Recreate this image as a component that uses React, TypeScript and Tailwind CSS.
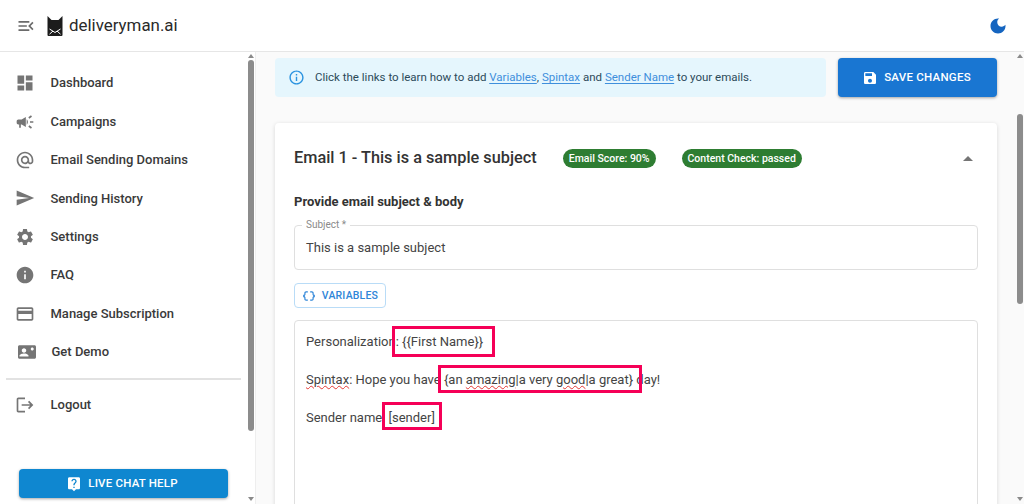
import type { ReactNode } from "react";

const Icon = ({ d, className }: { d: string; className?: string }) => (
  <svg viewBox="0 0 24 24" fill="currentColor" className={className}>
    <path d={d} />
  </svg>
);

const paths = {
  menuOpen: "M3 18h13v-2H3v2zm0-5h10v-2H3v2zm0-7v2h13V6H3zm18 9.59L17.42 12 21 8.41 19.59 7l-5 5 5 5L21 15.59z",
  dashboard: "M3 13h8V3H3v10zm0 8h8v-6H3v6zm10 0h8V11h-8v10zm0-18v6h8V3h-8z",
  campaign:
    "M18 11v2h4v-2h-4zm-2 6.61c.96.71 2.21 1.65 3.2 2.39.4-.53.8-1.07 1.2-1.6-.99-.74-2.24-1.68-3.2-2.4-.4.54-.8 1.08-1.2 1.61zM20.4 5.6c-.4-.53-.8-1.07-1.2-1.6-.99.74-2.24 1.68-3.2 2.4.4.53.8 1.07 1.2 1.6.96-.72 2.21-1.65 3.2-2.4zM4 9c-1.1 0-2 .9-2 2v2c0 1.1.9 2 2 2h1v4h2v-4h1l5 3V6L8 9H4zm11.5 3c0-1.33-.58-2.53-1.5-3.35v6.69c.92-.81 1.5-2.01 1.5-3.34z",
  at: "M12 2C6.48 2 2 6.48 2 12s4.48 10 10 10h5v-2h-5c-4.34 0-8-3.66-8-8s3.66-8 8-8 8 3.66 8 8v1.43c0 .79-.71 1.57-1.5 1.57s-1.5-.78-1.5-1.57V12c0-2.76-2.24-5-5-5s-5 2.24-5 5 2.24 5 5 5c1.38 0 2.64-.56 3.54-1.47.65.89 1.77 1.47 2.96 1.47 1.97 0 3.5-1.6 3.5-3.57V12c0-5.52-4.48-10-10-10zm0 13c-1.66 0-3-1.34-3-3s1.34-3 3-3 3 1.34 3 3-1.34 3-3 3z",
  send: "M2.01 21 23 12 2.01 3 2 10l15 2-15 2z",
  settings:
    "M19.14 12.94c.04-.3.06-.61.06-.94 0-.32-.02-.64-.07-.94l2.03-1.58c.18-.14.23-.41.12-.61l-1.92-3.32c-.12-.22-.37-.29-.59-.22l-2.39.96c-.5-.38-1.03-.7-1.62-.94l-.36-2.54c-.04-.24-.24-.41-.48-.41h-3.84c-.24 0-.43.17-.47.41l-.36 2.54c-.59.24-1.13.57-1.62.94l-2.39-.96c-.22-.08-.47 0-.59.22L2.74 8.87c-.12.21-.08.47.12.61l2.03 1.58c-.05.3-.09.63-.09.94s.02.64.07.94l-2.03 1.58c-.18.14-.23.41-.12.61l1.92 3.32c.12.22.37.29.59.22l2.39-.96c.5.38 1.03.7 1.62.94l.36 2.54c.05.24.24.41.48.41h3.84c.24 0 .44-.17.47-.41l.36-2.54c.59-.24 1.13-.56 1.62-.94l2.39.96c.22.08.47 0 .59-.22l1.92-3.32c.12-.22.07-.47-.12-.61l-2.01-1.58zM12 15.6c-1.98 0-3.6-1.62-3.6-3.6s1.62-3.6 3.6-3.6 3.6 1.62 3.6 3.6-1.62 3.6-3.6 3.6z",
  info: "M12 2C6.48 2 2 6.48 2 12s4.48 10 10 10 10-4.48 10-10S17.52 2 12 2zm1 15h-2v-6h2v6zm0-8h-2V7h2v2z",
  card: "M20 4H4c-1.11 0-1.99.89-1.99 2L2 18c0 1.11.89 2 2 2h16c1.11 0 2-.89 2-2V6c0-1.11-.89-2-2-2zm0 14H4v-6h16v6zm0-10H4V6h16v2z",
  demo: "M22 3H2C.9 3 0 3.9 0 5v14c0 1.1.9 2 2 2h20c1.1 0 1.99-.9 1.99-2L24 5c0-1.1-.9-2-2-2zM8 7c1.66 0 3 1.34 3 3s-1.34 3-3 3-3-1.34-3-3 1.34-3 3-3zm6 11H2v-1c0-2 4-3 6-3s6 1 6 3v1zm5-8c-1.1 0-2-.9-2-2s.9-2 2-2 2 .9 2 2-.9 2-2 2z",
  logout: "M17 7l-1.41 1.41L18.17 11H8v2h10.17l-2.58 2.58L17 17l5-5zM4 5h8V3H4c-1.1 0-2 .9-2 2v14c0 1.1.9 2 2 2h8v-2H4V5z",
  help: "M19 2H5c-1.11 0-2 .9-2 2v14c0 1.1.89 2 2 2h4l3 3 3-3h4c1.1 0 2-.9 2-2V4c0-1.1-.9-2-2-2zm-6 16h-2v-2h2v2zm2.07-7.75-.9.92C13.45 11.9 13 12.5 13 14h-2v-.5c0-1.1.45-2.1 1.17-2.83l1.24-1.26c.37-.36.59-.86.59-1.41 0-1.1-.9-2-2-2s-2 .9-2 2H8c0-2.21 1.79-4 4-4s4 1.79 4 4c0 .88-.36 1.68-.93 2.25z",
  save: "M17 3H5c-1.11 0-2 .9-2 2v14c0 1.1.89 2 2 2h14c1.1 0 2-.9 2-2V7l-4-4zm-5 16c-1.66 0-3-1.34-3-3s1.34-3 3-3 3 1.34 3 3-1.34 3-3 3zm3-10H5V5h10v4z",
  moon: "M12 3c-4.97 0-9 4.03-9 9s4.03 9 9 9 9-4.03 9-9c0-.46-.04-.92-.1-1.36-.98 1.37-2.58 2.26-4.4 2.26-2.98 0-5.4-2.42-5.4-5.4 0-1.81.89-3.42 2.26-4.4-.44-.06-.9-.1-1.36-.1z",
  infoOutline: "M11 7h2v2h-2zm0 4h2v6h-2zm1-9C6.48 2 2 6.48 2 12s4.48 10 10 10 10-4.48 10-10S17.52 2 12 2zm0 18c-4.41 0-8-3.59-8-8s3.59-8 8-8 8 3.59 8 8-3.59 8-8 8z",
  braces:
    "M4 7v2c0 .55-.45 1-1 1H2v4h1c.55 0 1 .45 1 1v2c0 1.65 1.35 3 3 3h3v-2H7c-.55 0-1-.45-1-1v-2c0-1.3-.84-2.42-2-2.83v-.34C5.16 11.42 6 10.3 6 9V7c0-.55.45-1 1-1h3V4H7C5.35 4 4 5.35 4 7zm17 3c-.55 0-1-.45-1-1V7c0-1.65-1.35-3-3-3h-3v2h3c.55 0 1 .45 1 1v2c0 1.3.84 2.42 2 2.83v.34c-1.16.41-2 1.52-2 2.83v2c0 .55-.45 1-1 1h-3v2h3c1.65 0 3-1.35 3-3v-2c0-.55.45-1 1-1h1v-4h-1z",
};

const navItems = [
  { label: "Dashboard", icon: paths.dashboard },
  { label: "Campaigns", icon: paths.campaign },
  { label: "Email Sending Domains", icon: paths.at },
  { label: "Sending History", icon: paths.send },
  { label: "Settings", icon: paths.settings },
  { label: "FAQ", icon: paths.info },
  { label: "Manage Subscription", icon: paths.card },
];

function NavRow({ label, icon, shift }: { label: string; icon: string; shift?: boolean }) {
  return (
    <div className={`flex h-[38.4px] items-center ${shift ? "pl-[18px]" : "pl-[15px]"}`}>
      <Icon d={icon} className={`shrink-0 text-[#757575] ${shift ? "h-[18px] w-[18px]" : "h-5 w-5"}`} />
      <span className="ml-[15.5px] text-[13px] font-medium text-[#3a3a3a]">{label}</span>
    </div>
  );
}

// Narrow scrollbar track with arrows, as the browser draws it.
function Scrollbar({ top, height, className }: { top: string; height: string; className: string }) {
  return (
    <div className={`flex shrink-0 flex-col items-center ${className}`}>
      <div className="mt-[1px] h-0 w-0 border-x-[3px] border-b-[4px] border-x-transparent border-b-[#8a8a8a]" />
      <div className={`w-[6px] rounded-full bg-[#8c8c8c] ${top} ${height}`} />
      <div className="mt-auto mb-[3px] h-0 w-0 border-x-[3px] border-t-[4px] border-x-transparent border-t-[#8a8a8a]" />
    </div>
  );
}

const Squiggle = ({ children }: { children: ReactNode }) => (
  <span className="underline decoration-[#e53935] decoration-wavy decoration-1 underline-offset-1">{children}</span>
);

const Pill = ({ children, className }: { children: ReactNode; className: string }) => (
  <span className={`flex h-[19px] items-center justify-center rounded-full bg-[#2e7d32] text-[10.5px] font-medium text-white ${className}`}>
    {children}
  </span>
);

const HelpLink = ({ children }: { children: ReactNode }) => (
  <span className="text-[#3f8fdc] underline underline-offset-2">{children}</span>
);

export default function App() {
  return (
    <div className="flex h-[504px] w-[1024px] flex-col overflow-hidden bg-white font-['Roboto',sans-serif] text-[#333]">
      <header className="flex h-[52px] shrink-0 items-center border-b border-[#e6e6e6] pl-[16px] pr-[16px]">
        <Icon d={paths.menuOpen} className="h-[20px] w-[20px] text-[#6b6b6b]" />
        <svg viewBox="0 0 16 20" className="ml-[11px] h-[20px] w-[16px]">
          <path d="M0.5 0 L4.5 4 H11.5 L15.5 0 V19 Q15.5 20 14.5 20 H1.5 Q0.5 20 0.5 19 Z" fill="#1c1c1c" />
          <path d="M2.5 13 L8 16.5 L13.5 13 M2.5 18.2 L6 15 M13.5 18.2 L10 15" stroke="#fff" strokeWidth="1" fill="none" />
        </svg>
        <span className="mt-px ml-[6px] text-[16.9px] text-[#2a2a2a]">deliveryman.ai</span>
        <Icon d={paths.moon} className="ml-auto h-[20px] w-[20px] text-[#1565c0]" />
      </header>

      <div className="flex min-h-0 flex-1">
        <aside className="flex w-[256px] shrink-0 border-r border-[#eeeeee]">
          <div className="flex w-[247px] flex-col">
            <nav className="pt-[12px]">
              {navItems.map((item) => (
                <NavRow key={item.label} label={item.label} icon={item.icon} />
              ))}
              <NavRow label="Get Demo" icon={paths.demo} shift />
              <div className="mx-[6px] mt-[7px] mb-[6px] h-[1.5px] w-[235px] bg-[#e2e2e2]" />
              <NavRow label="Logout" icon={paths.logout} />
            </nav>
            <button className="mt-auto mb-[6px] ml-[19px] flex h-[29px] w-[209px] items-center justify-center rounded bg-[#0f87d0] pr-[3px] text-[11.5px] font-medium tracking-[0.2px] text-white shadow-[0_1px_3px_rgba(0,0,0,0.35)]">
              <Icon d={paths.help} className="mr-[6px] h-[16px] w-[16px]" />
              LIVE CHAT HELP
            </button>
          </div>
          <Scrollbar top="mt-[2px]" height="h-[371px]" className="w-[8px] pt-[1px]" />
        </aside>

        <main className="flex min-w-0 flex-1 bg-[#fafafa]">
          <div className="min-w-0 flex-1 pl-[19px] pr-[18px] pt-[6px]">
            <div className="flex gap-[12px]">
              <div className="flex h-[39px] flex-1 items-center rounded bg-[#e5f6fd] pl-[13px] text-[11.5px] text-[#2c4a5a]">
                <Icon d={paths.infoOutline} className="h-[17px] w-[17px] text-[#2a93e0]" />
                <span className="ml-[10px]">
                  Click the links to learn how to add <HelpLink>Variables</HelpLink>, <HelpLink>Spintax</HelpLink> and{" "}
                  <HelpLink>Sender Name</HelpLink> to your emails.
                </span>
              </div>
              <button className="flex h-[39px] w-[159px] items-center justify-center rounded bg-[#1976d2] pr-[2px] text-[11.5px] font-medium tracking-[0.25px] text-white shadow-[0_1px_3px_rgba(0,0,0,0.35)]">
                <Icon d={paths.save} className="mr-[6px] h-[16px] w-[16px]" />
                SAVE CHANGES
              </button>
            </div>

            <section className="mt-[26px] h-[500px] rounded bg-white px-[19px] shadow-[0_1px_4px_rgba(0,0,0,0.14)]">
              <div className="flex h-[70px] items-center pt-[1px]">
                <h2 className="text-[16.3px] font-medium text-[#333]">Email 1 - This is a sample subject</h2>
                <Pill className="ml-[26px] w-[93px]">Email Score: 90%</Pill>
                <Pill className="ml-[26px] w-[120px]">Content Check: passed</Pill>
                <div className="ml-auto mr-[5px] h-0 w-0 border-x-[5px] border-b-[5px] border-x-transparent border-b-[#757575]" />
              </div>

              <p className="-mt-px text-[13px] leading-[20px] font-bold text-[#333]">Provide email subject &amp; body</p>

              <div className="relative mt-[13px] flex h-[45px] items-center rounded border border-[#dfdfdf] pl-[11px] text-[13px] text-[#444]">
                <span className="absolute -top-[7px] left-[7px] bg-white px-[4px] text-[10px] leading-[12px] text-[#8a8a8a]">Subject *</span>
                This is a sample subject
              </div>

              <button className="mt-[13px] flex h-[25px] w-[92px] items-center justify-center rounded border border-[#b9dcf7] text-[10.5px] font-medium tracking-[0.2px] text-[#2f86d8]">
                <Icon d={paths.braces} className="mr-[6px] h-[14px] w-[14px]" />
                VARIABLES
              </button>

              <div className="relative mt-[12px] h-[200px] rounded border border-[#dfdfdf] pl-[11px] pt-[11px] text-[13px] leading-[20px] text-[#444]">
                <p>Personalization: {"{{First Name}}"}</p>
                <p className="mt-[18px]">
                  <Squiggle>Spintax</Squiggle>: Hope you have {"{an "}
                  <Squiggle>amazing</Squiggle>|a very <Squiggle>good</Squiggle>|a great{"}"} day!
                </p>
                <p className="mt-[18px]">Sender name: [sender]</p>
                <div className="absolute left-[97px] top-[5px] h-[31px] w-[103px] border-[3px] border-[#f50057]" />
                <div className="absolute left-[143px] top-[44px] h-[28px] w-[204px] border-[3px] border-[#f50057]" />
                <div className="absolute left-[87px] top-[81px] h-[28px] w-[60px] border-[3px] border-[#f50057]" />
              </div>
            </section>
          </div>
          <Scrollbar top="mt-[56px]" height="h-[190px]" className="w-[9px] pt-[1px]" />
        </main>
      </div>
    </div>
  );
}
